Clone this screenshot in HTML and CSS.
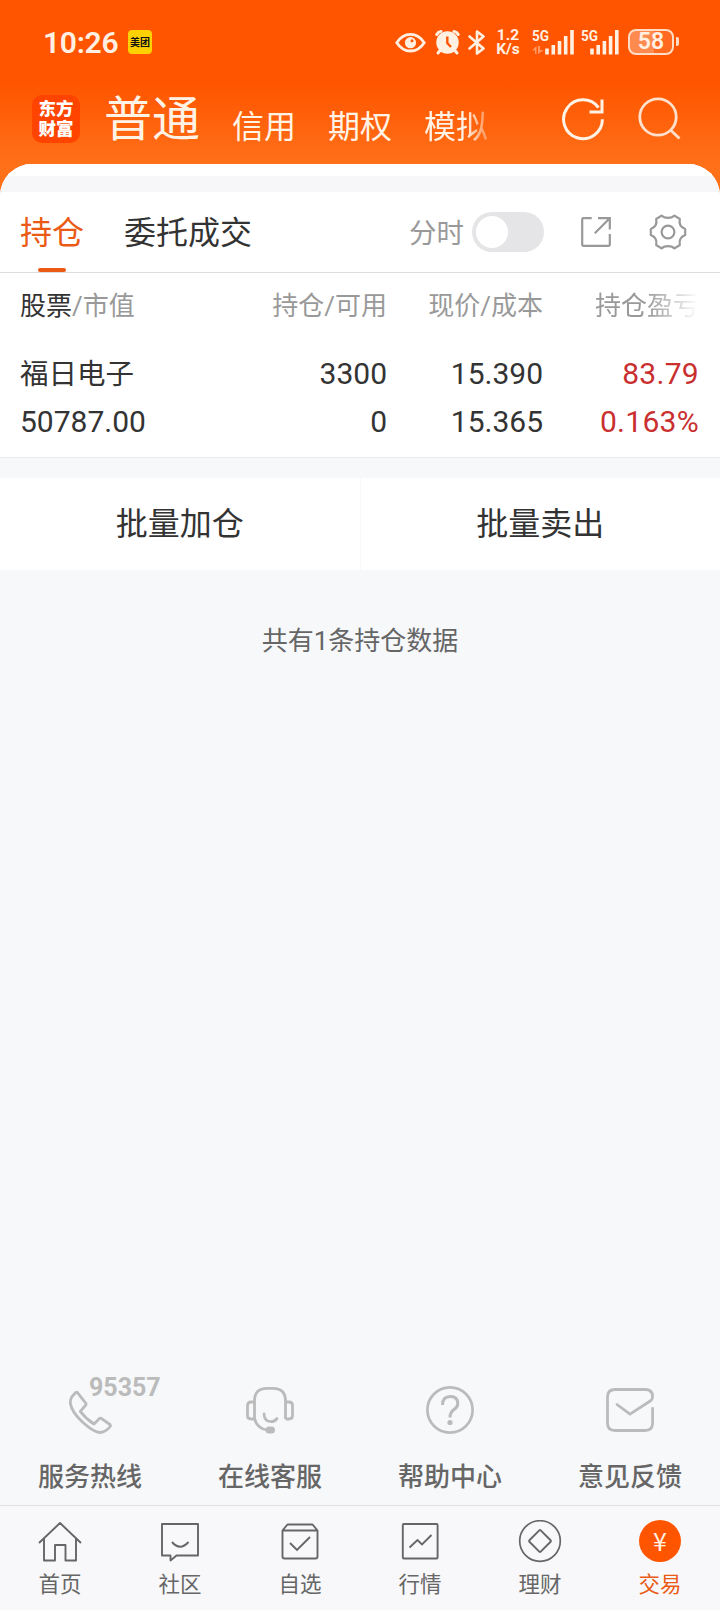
FILE: index.html
```
<!DOCTYPE html>
<html lang="zh-CN">

<head>
  <meta charset="UTF-8">
  <meta name="viewport" content="width=device-width, initial-scale=1.0">
  <title>交易 - 持仓</title>
  <link rel="stylesheet" href="styles.css">
</head>

<body>
  <header class="top">
    <div class="status-bar">
      <span class="time">10:26</span>
      <span class="app-badge">美团</span>
      <div class="status-icons">
        <svg class="eye" width="31" height="28" viewBox="0 0 31 28">
          <path d="M1.8 14.7C5.5 9 10 6.4 15.5 6.4S25.5 9 29.2 14.7C25.5 20.4 21 23 15.5 23S5.5 20.4 1.8 14.7Z" fill="none" stroke="#fff0e2" stroke-width="2.8"/>
          <circle cx="15.5" cy="14.7" r="5.6" fill="#fff0e2"/>
          <circle cx="17" cy="12.7" r="1.5" fill="#ff5500"/>
        </svg>
        <svg class="alarm" width="25" height="28" viewBox="0 0 25 28">
          <g fill="none" stroke="#fff0e2" stroke-width="3" stroke-linecap="round">
            <path d="M1.8 6.5Q3 4 6 3.4M23.2 6.5Q22 4 19 3.4"/>
            <path d="M5.5 22L3 25M19.5 22L22 25"/>
          </g>
          <circle cx="12.5" cy="14.5" r="11.2" fill="#fff0e2"/>
          <path d="M12.3 8.5V15L16 19" fill="none" stroke="#ff5500" stroke-width="2.4"/>
        </svg>
        <svg class="bluetooth" width="18" height="28" viewBox="0 0 18 28">
          <path d="M1.5 8.5L15.5 20.5L9 25.5V3.5L15.5 8.5L1.5 20.5" fill="none" stroke="#fff0e2" stroke-width="2.6" stroke-linejoin="round" stroke-linecap="round"/>
        </svg>
        <div class="speed"><span>1.2</span><span>K/s</span></div>
        <svg class="signal" width="42" height="28" viewBox="0 0 42 28">
          <text x="0" y="12.5" class="net" textLength="17" lengthAdjust="spacingAndGlyphs">5G</text>
          <path d="M0 22.5L4.5 18V26H3V22.5ZM6 18V26L11.5 22H8V18Z" fill="#ff9a66"/>
          <path d="M15 26.5V20.5M21.3 26.5V17M27.5 26.5V13M33.7 26.5V8M40 26.5V2" stroke="#fff0e2" stroke-width="3.6"/>
        </svg>
        <svg class="signal" width="38" height="28" viewBox="0 0 38 28">
          <text x="0" y="12.5" class="net" textLength="17" lengthAdjust="spacingAndGlyphs">5G</text>
          <path d="M11 26.5V20.5M17.2 26.5V17M23.4 26.5V13M29.6 26.5V8M35.8 26.5V2" stroke="#fff0e2" stroke-width="3.6"/>
        </svg>
        <div class="battery">58</div>
      </div>
    </div>

    <div class="title-bar">
      <div class="logo"><span>东方</span><span>财富</span></div>
      <nav class="accounts">
        <a class="current">普通</a>
        <a>信用</a>
        <a>期权</a>
        <a class="faded">模拟</a>
      </nav>
      <svg class="refresh" width="44" height="44" viewBox="0 0 44 44">
        <path d="M41.4 22.3A19.4 19.4 0 1 1 37.5 10.6" fill="none" stroke="#fff3e6" stroke-width="3"/>
        <path d="M41 2.5V15H28.5" fill="none" stroke="#fff3e6" stroke-width="3"/>
      </svg>
      <svg class="search" width="44" height="44" viewBox="0 0 44 44">
        <circle cx="21" cy="20" r="18.2" fill="none" stroke="#ffe0cc" stroke-width="2.8"/>
        <path d="M33.5 33L42.5 41.5" stroke="#ffe0cc" stroke-width="2.8"/>
      </svg>
    </div>
  </header>

  <main class="sheet">
    <div class="band"></div>

    <div class="tabs">
      <a class="tab active">持仓</a>
      <a class="tab">委托成交</a>
      <span class="toggle-label">分时</span>
      <span class="toggle"></span>
      <svg class="share" width="32" height="32" viewBox="0 0 32 32">
        <path d="M11.7 2.2H3.2Q2.2 2.2 2.2 3.2V28.8Q2.2 29.8 3.2 29.8H28.8Q29.8 29.8 29.8 28.8V18M18 2.2H29.8V13.5M29.5 2.5L14.8 17.2" fill="none" stroke="#999" stroke-width="2.2"/>
      </svg>
      <svg class="gear" width="38" height="38" viewBox="0 0 38 38">
        <path d="M12.5 2.600Q14.500 4.800 19 4.800T25.500 2.600L30.800 6C30 10 31 14 36.200 16V22C31 24 30 28 30.800 32L25.500 35.400Q23.500 33.200 19 33.200T12.500 35.400L7.200 32C8 28 7 24 1.800 22V16C7 14 8 10 7.200 6Z" fill="none" stroke="#999" stroke-width="2.2" stroke-linejoin="round"/>
        <circle cx="19" cy="19" r="6.4" fill="none" stroke="#999" stroke-width="2.2"/>
      </svg>
    </div>

    <div class="holdings">
      <div class="row head">
        <span><b>股票</b>/市值</span>
        <span>持仓/可用</span>
        <span>现价/成本</span>
        <span class="cut">持仓盈亏</span>
      </div>
      <div class="row">
        <span class="name">福日电子</span>
        <span>3300</span>
        <span>15.390</span>
        <span class="up">83.79</span>
      </div>
      <div class="row">
        <span>50787.00</span>
        <span>0</span>
        <span>15.365</span>
        <span class="up">0.163%</span>
      </div>
    </div>

    <div class="batch">
      <button>批量加仓</button>
      <button>批量卖出</button>
    </div>

    <p class="total">共有1条持仓数据</p>
  </main>

  <section class="support">
    <a class="support-item">
      <svg width="48" height="48" viewBox="0 0 48 48">
        <path d="M11.3 6.3L20 17.5Q20.3 18.3 19.8 19L14.3 25.3Q20 33 28 38L33.5 32.4Q34.3 31.8 35.2 32.3L44 38.5Q45 39.6 44.2 40.5Q39.5 46.5 33.5 46.5C26 45.5 6 30 4.3 17Q4 13.5 6 10.5L9.8 6.5Q10.6 5.8 11.3 6.3Z" fill="none" stroke="#bbb" stroke-width="2.8" stroke-linejoin="round"/>
      </svg>
      <span class="hotline">95357</span>
      <span>服务热线</span>
    </a>
    <a class="support-item">
      <svg width="48" height="48" viewBox="0 0 48 48">
        <g fill="none" stroke="#bbb" stroke-width="2.8">
          <path d="M8.5 33V15Q8.5 2.4 21 2.4H27Q39.5 2.4 39.5 15V33"/>
          <path d="M8.5 16H5Q1.5 16 1.5 19.5V29.5Q1.5 33 5 33H8.5M39.5 16H43Q46.5 16 46.5 19.5V29.5Q46.5 33 43 33H39.5"/>
          <path d="M8.5 32Q10.5 43 22 44.2"/>
          <path d="M18 28Q18.5 35.6 25 35.6Q29 35.6 31 32.6" stroke-linecap="round"/>
        </g>
        <rect x="19.5" y="40.5" width="9.5" height="7" rx="3.5" fill="#bbb"/>
      </svg>
      <span>在线客服</span>
    </a>
    <a class="support-item">
      <svg width="48" height="48" viewBox="0 0 48 48">
        <circle cx="24" cy="24" r="22.6" fill="none" stroke="#bbb" stroke-width="2.7"/>
        <path d="M16.5 19Q16.5 10.5 24.3 10.5Q31.8 10.5 31.8 17.5Q31.8 21 28 23.5Q24 26.5 24 31.5" fill="none" stroke="#bbb" stroke-width="3"/>
        <circle cx="24" cy="36.5" r="2.6" fill="#bbb"/>
      </svg>
      <span>帮助中心</span>
    </a>
    <a class="support-item">
      <svg width="48" height="48" viewBox="0 0 48 48">
        <path d="M11 18.5L24 28.2L45 14.5Q46.6 13 46.6 10.5Q46.6 3.5 39 3.5H9Q1.5 3.5 1.5 11V37Q1.5 44.5 9 44.5H39Q46.6 44.5 46.6 37V22.5" fill="none" stroke="#bbb" stroke-width="2.8" stroke-linejoin="round" stroke-linecap="round"/>
      </svg>
      <span>意见反馈</span>
    </a>
  </section>

  <nav class="bottom-nav">
    <a>
      <svg width="44" height="44" viewBox="0 0 44 44">
        <path d="M1 23L22 3L43 23M6 18.5V40.5H17V25H27.5V40.5H38V18.5" fill="none" stroke="#666" stroke-width="1.9" stroke-linejoin="round"/>
      </svg>
      <span>首页</span>
    </a>
    <a>
      <svg width="44" height="44" viewBox="0 0 44 44">
        <path d="M4 4H40V35.5H18.5L12.5 40.5V35.5H4Z" fill="none" stroke="#666" stroke-width="1.9" stroke-linejoin="round"/>
        <path d="M14 22Q22 31.5 30.5 22" fill="none" stroke="#666" stroke-width="2"/>
      </svg>
      <span>社区</span>
    </a>
    <a>
      <svg width="44" height="44" viewBox="0 0 44 44">
        <path d="M4.5 10.5L9.5 4.5H34.5L39.5 10.5V36.5Q39.5 38.5 37.5 38.5H6.5Q4.5 38.5 4.5 36.5ZM4.5 10.5H39.5" fill="none" stroke="#666" stroke-width="1.9" stroke-linejoin="round"/>
        <path d="M12 23L19 30L32 17" fill="none" stroke="#666" stroke-width="1.9"/>
      </svg>
      <span>自选</span>
    </a>
    <a>
      <svg width="44" height="44" viewBox="0 0 44 44">
        <rect x="4.8" y="4" width="34.8" height="34.5" rx="1" fill="none" stroke="#666" stroke-width="1.9"/>
        <path d="M11.5 27.5L19.5 20L24 24.5L33.5 15" fill="none" stroke="#666" stroke-width="1.9"/>
      </svg>
      <span>行情</span>
    </a>
    <a>
      <svg width="44" height="44" viewBox="0 0 44 44">
        <circle cx="22" cy="21" r="20.3" fill="none" stroke="#666" stroke-width="1.7"/>
        <rect x="14" y="13" width="16" height="16" rx="1" transform="rotate(45 22 21)" fill="none" stroke="#666" stroke-width="1.9"/>
      </svg>
      <span>理财</span>
    </a>
    <a class="active">
      <i class="yen">¥</i>
      <span>交易</span>
    </a>
  </nav>
</body>

</html>
```
FILE: styles.css
```
* {
  box-sizing: border-box;
}

body {
  margin: 0;
  height: 1610px;
  display: flex;
  flex-direction: column;
  font-family: Roboto, "Noto Sans CJK SC", sans-serif;
  color: #333;
  background-color: #f7f8fa;
}

svg {
  display: block;
  flex: none;
}

/* Header */
.top {
  height: 200px;
  margin-bottom: -36px;
  background: linear-gradient(#ff5500 84px, #ff7019 164px);
}

.status-bar {
  height: 84px;
  padding: 28px 41px 0 43px;
  display: flex;
  align-items: flex-start;
  color: #fff0e2;
}

.time {
  width: 76px;
  font-size: 30px;
  font-weight: 600;
  line-height: 29px;
  letter-spacing: -0.3px;
}

.app-badge {
  width: 24px;
  height: 24px;
  margin: 2px 0 0 9px;
  border-radius: 4px;
  background-color: #ffd100;
  color: #111;
  font-size: 10px;
  font-weight: bold;
  line-height: 25px;
  text-align: center;
}

.status-icons {
  margin-left: auto;
  display: flex;
}

.alarm {
  margin-left: 9px;
}

.bluetooth {
  margin-left: 8px;
}

.speed {
  width: 26px;
  height: 28px;
  margin-left: 9px;
  display: flex;
  flex-direction: column;
  justify-content: space-between;
  font-size: 15.5px;
  font-weight: bold;
  line-height: 14px;
  text-align: center;
}

.signal {
  margin-left: 11px;
}

.signal + .signal {
  margin-left: 7px;
}

.net {
  font-size: 15px;
  font-weight: bold;
  fill: #fff0e2;
}

.battery {
  position: relative;
  width: 46px;
  height: 26px;
  margin: 1px 5px 0 9px;
  border: 2.5px solid #ffdcc4;
  border-radius: 8px;
  background: linear-gradient(90deg, #ff8a50 58%, #ff6a20 58%);
  font-size: 23px;
  font-weight: 600;
  line-height: 22px;
  text-align: center;
}

.battery::after {
  content: "";
  position: absolute;
  right: -7px;
  top: 6px;
  width: 3px;
  height: 9px;
  border-radius: 0 2px 2px 0;
  background-color: #ffdcc4;
}

.title-bar {
  display: flex;
  align-items: flex-start;
  padding: 0 39px 0 32px;
}

.logo {
  width: 48px;
  height: 48px;
  margin-top: 11px;
  padding-top: 4px;
  display: flex;
  flex-direction: column;
  border-radius: 10px;
  background-color: #ff4400;
  color: #fff;
  font-size: 17.5px;
  font-weight: 900;
  line-height: 20px;
  text-align: center;
}

.accounts {
  display: flex;
  gap: 32px;
  margin-left: 24px;
  color: #fff3e6;
  font-size: 32px;
  line-height: 32px;
}

.accounts a {
  margin-top: 27px;
}

.accounts .current {
  margin-top: 12px;
  font-size: 48px;
  line-height: 48px;
}

.accounts .faded {
  -webkit-mask-image: linear-gradient(90deg, #000 65%, transparent 115%);
  mask-image: linear-gradient(90deg, #000 65%, transparent 115%);
}

.refresh {
  margin: 13px 0 0 auto;
}

.search {
  margin: 13px 0 0 32px;
}

/* White sheet */
.sheet {
  border-radius: 32px 32px 0 0;
  overflow: hidden;
  background-color: #f7f8fa;
}

.band {
  height: 28px;
  border-top: 12px solid #fff;
  background-color: #f7f7fa;
}

.tabs {
  height: 81px;
  padding: 0 33px 0 20px;
  display: flex;
  align-items: center;
  background-color: #fff;
  border-bottom: 1px solid #ddd;
}

.tab {
  position: relative;
  margin-right: 40px;
  padding-top: 2px;
  font-size: 32px;
  line-height: 78px;
}

.tab.active {
  color: #ea5a14;
}

.tab.active::after {
  content: "";
  position: absolute;
  left: 18px;
  bottom: 0;
  width: 28px;
  height: 4px;
  border-radius: 2px;
  background-color: #ea5a14;
}

.toggle-label {
  margin-left: auto;
  padding-top: 3px;
  color: #999;
  font-size: 27.5px;
  line-height: 40px;
}

.toggle {
  width: 72px;
  height: 40px;
  margin-left: 8px;
  padding: 4px;
  border-radius: 20px;
  background-color: #e5e5e7;
}

.toggle::before {
  content: "";
  display: block;
  width: 32px;
  height: 32px;
  border-radius: 50%;
  background-color: #fff;
}

.share {
  margin-left: 36px;
}

.gear {
  margin-left: 37px;
}

.holdings {
  height: 185px;
  padding: 9px 21px 0 20px;
  background-color: #fff;
  border-bottom: 1px solid #ebebeb;
}

.row {
  display: grid;
  grid-template-columns: 187px 180px 156px 156px;
  font-size: 30px;
  line-height: 48px;
}

.row span {
  text-align: right;
  white-space: nowrap;
}

.row span:first-child {
  text-align: left;
}

.row .name {
  padding-top: 1px;
  font-size: 28.5px;
  line-height: 47px;
}

.row.head {
  margin-bottom: 20px;
  color: #999;
  font-size: 26px;
}

.head b {
  color: #333;
  font-weight: normal;
}

.cut {
  -webkit-mask-image: linear-gradient(90deg, #000 66%, transparent);
  mask-image: linear-gradient(90deg, #000 66%, transparent);
}

.up {
  color: #c92f2f;
  letter-spacing: 0.3px;
}

.batch {
  display: flex;
  gap: 1px;
  margin-top: 20px;
}

.batch button {
  flex: 1;
  height: 92px;
  padding: 0;
  border: none;
  background-color: #fff;
  color: #333;
  font-family: inherit;
  font-size: 32px;
  line-height: 92px;
}

.total {
  margin: 50px 0 0;
  color: #666;
  font-size: 26px;
  line-height: 42px;
  text-align: center;
}

/* Support links */
.support {
  margin-top: auto;
  height: 119px;
  display: grid;
  grid-template-columns: repeat(4, 1fr);
}

.support-item {
  position: relative;
  display: flex;
  flex-direction: column;
  align-items: center;
  gap: 27px;
  color: #666;
  font-size: 26px;
  font-weight: 500;
  line-height: 32px;
}

.hotline {
  position: absolute;
  left: 89px;
  top: -11px;
  color: #bbb;
  font-size: 25px;
  font-weight: bold;
  line-height: 26px;
}

/* Bottom navigation */
.bottom-nav {
  height: 105px;
  padding-top: 14px;
  display: grid;
  grid-template-columns: repeat(6, 1fr);
  border-top: 1px solid #e0e0e2;
  background-color: #f8f8fa;
}

.bottom-nav a {
  display: flex;
  flex-direction: column;
  align-items: center;
  gap: 7px;
  color: #666;
  font-size: 21.5px;
  line-height: 28px;
}

.bottom-nav .active {
  color: #ea5a14;
}

.yen {
  width: 42px;
  height: 42px;
  margin-bottom: 2px;
  border-radius: 50%;
  background-color: #ff5500;
  color: #fff0e2;
  font-family: "Noto Sans CJK SC", sans-serif;
  font-size: 25px;
  font-style: normal;
  line-height: 40px;
  text-align: center;
}
```
